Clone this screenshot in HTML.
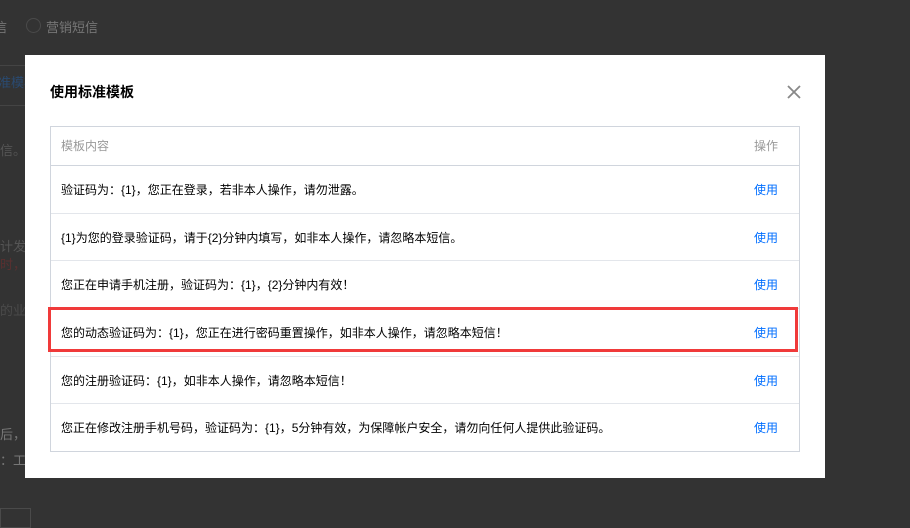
<!DOCTYPE html>
<html><head><meta charset="utf-8"><style>
*{margin:0;padding:0;box-sizing:border-box}
body{width:910px;height:523px;background:#333;position:relative;overflow:hidden;font-family:"Liberation Sans","Noto Sans CJK SC",sans-serif;font-size:12px}
.bg{position:absolute;color:#6a6a6a;font-size:13px;white-space:nowrap}
.dlg{position:absolute;left:25px;top:55px;width:800px;height:423px;background:#fff}
.title{position:absolute;left:25px;top:27px;font-size:14px;font-weight:bold;color:#000}
.close{position:absolute;left:762px;top:30px;width:14px;height:14px}
.tbl{position:absolute;left:25px;top:71px;width:750px;height:326px;border:1px solid #d0d5dd}
.row{height:47.7px;border-bottom:1px solid #e3e6eb;position:relative;color:#000}
.row:last-child{border-bottom:none}
.row .t{position:absolute;left:10px;top:15px;white-space:nowrap}
.row .a{position:absolute;right:21px;top:15px;color:#006eff}
.hd{height:39px;border-bottom:1px solid #d0d5dd;color:#999}
.hd .t,.hd .a{top:10px;color:#999}
.red{position:absolute;left:48px;top:307px;width:750px;height:45px;border:3px solid #f03a3a}
</style></head><body>
<div class="bg" style="left:-6px;top:17px;color:#777">信</div>
<div style="position:absolute;left:26px;top:18px;width:15px;height:15px;border:1px solid #4a4a4a;border-radius:50%"></div>
<div class="bg" style="left:46px;top:17px;color:#777">营销短信</div>
<div class="bg" style="left:-2px;top:72px;color:#2a4a70">准模板</div>
<div style="position:absolute;left:0;top:65px;width:25px;height:1px;background:#444"></div>
<div style="position:absolute;left:0;top:105px;width:25px;height:1px;background:#444"></div>
<div class="bg" style="left:0;top:140px;color:#555">信。</div>
<div class="bg" style="left:0;top:236px;color:#555">计发</div>
<div class="bg" style="left:0;top:254px;color:#5a3030">时，</div>
<div class="bg" style="left:0;top:300px;color:#4a4a4a">的业</div>
<div class="bg" style="left:0;top:424px;color:#777">后，</div>
<div class="bg" style="left:0;top:450px;color:#777">：工</div>
<div style="position:absolute;left:0;top:508px;width:31px;height:20px;border:1px solid #4a4a4a"></div>
<div class="dlg">
<div class="title">使用标准模板</div>
<svg class="close" viewBox="0 0 14 14"><path d="M1 1L13 13M13 1L1 13" stroke="#888" stroke-width="1.8"/></svg>
<div class="tbl">
<div class="row hd"><span class="t">模板内容</span><span class="a">操作</span></div>
<div class="row"><span class="t">验证码为：{1}，您正在登录，若非本人操作，请勿泄露。</span><span class="a">使用</span></div>
<div class="row"><span class="t">{1}为您的登录验证码，请于{2}分钟内填写，如非本人操作，请忽略本短信。</span><span class="a">使用</span></div>
<div class="row"><span class="t">您正在申请手机注册，验证码为：{1}，{2}分钟内有效！</span><span class="a">使用</span></div>
<div class="row"><span class="t">您的动态验证码为：{1}，您正在进行密码重置操作，如非本人操作，请忽略本短信！</span><span class="a">使用</span></div>
<div class="row"><span class="t">您的注册验证码：{1}，如非本人操作，请忽略本短信！</span><span class="a">使用</span></div>
<div class="row"><span class="t">您正在修改注册手机号码，验证码为：{1}，5分钟有效，为保障帐户安全，请勿向任何人提供此验证码。</span><span class="a">使用</span></div>
</div>
</div>
<div class="red"></div>
</body></html>
